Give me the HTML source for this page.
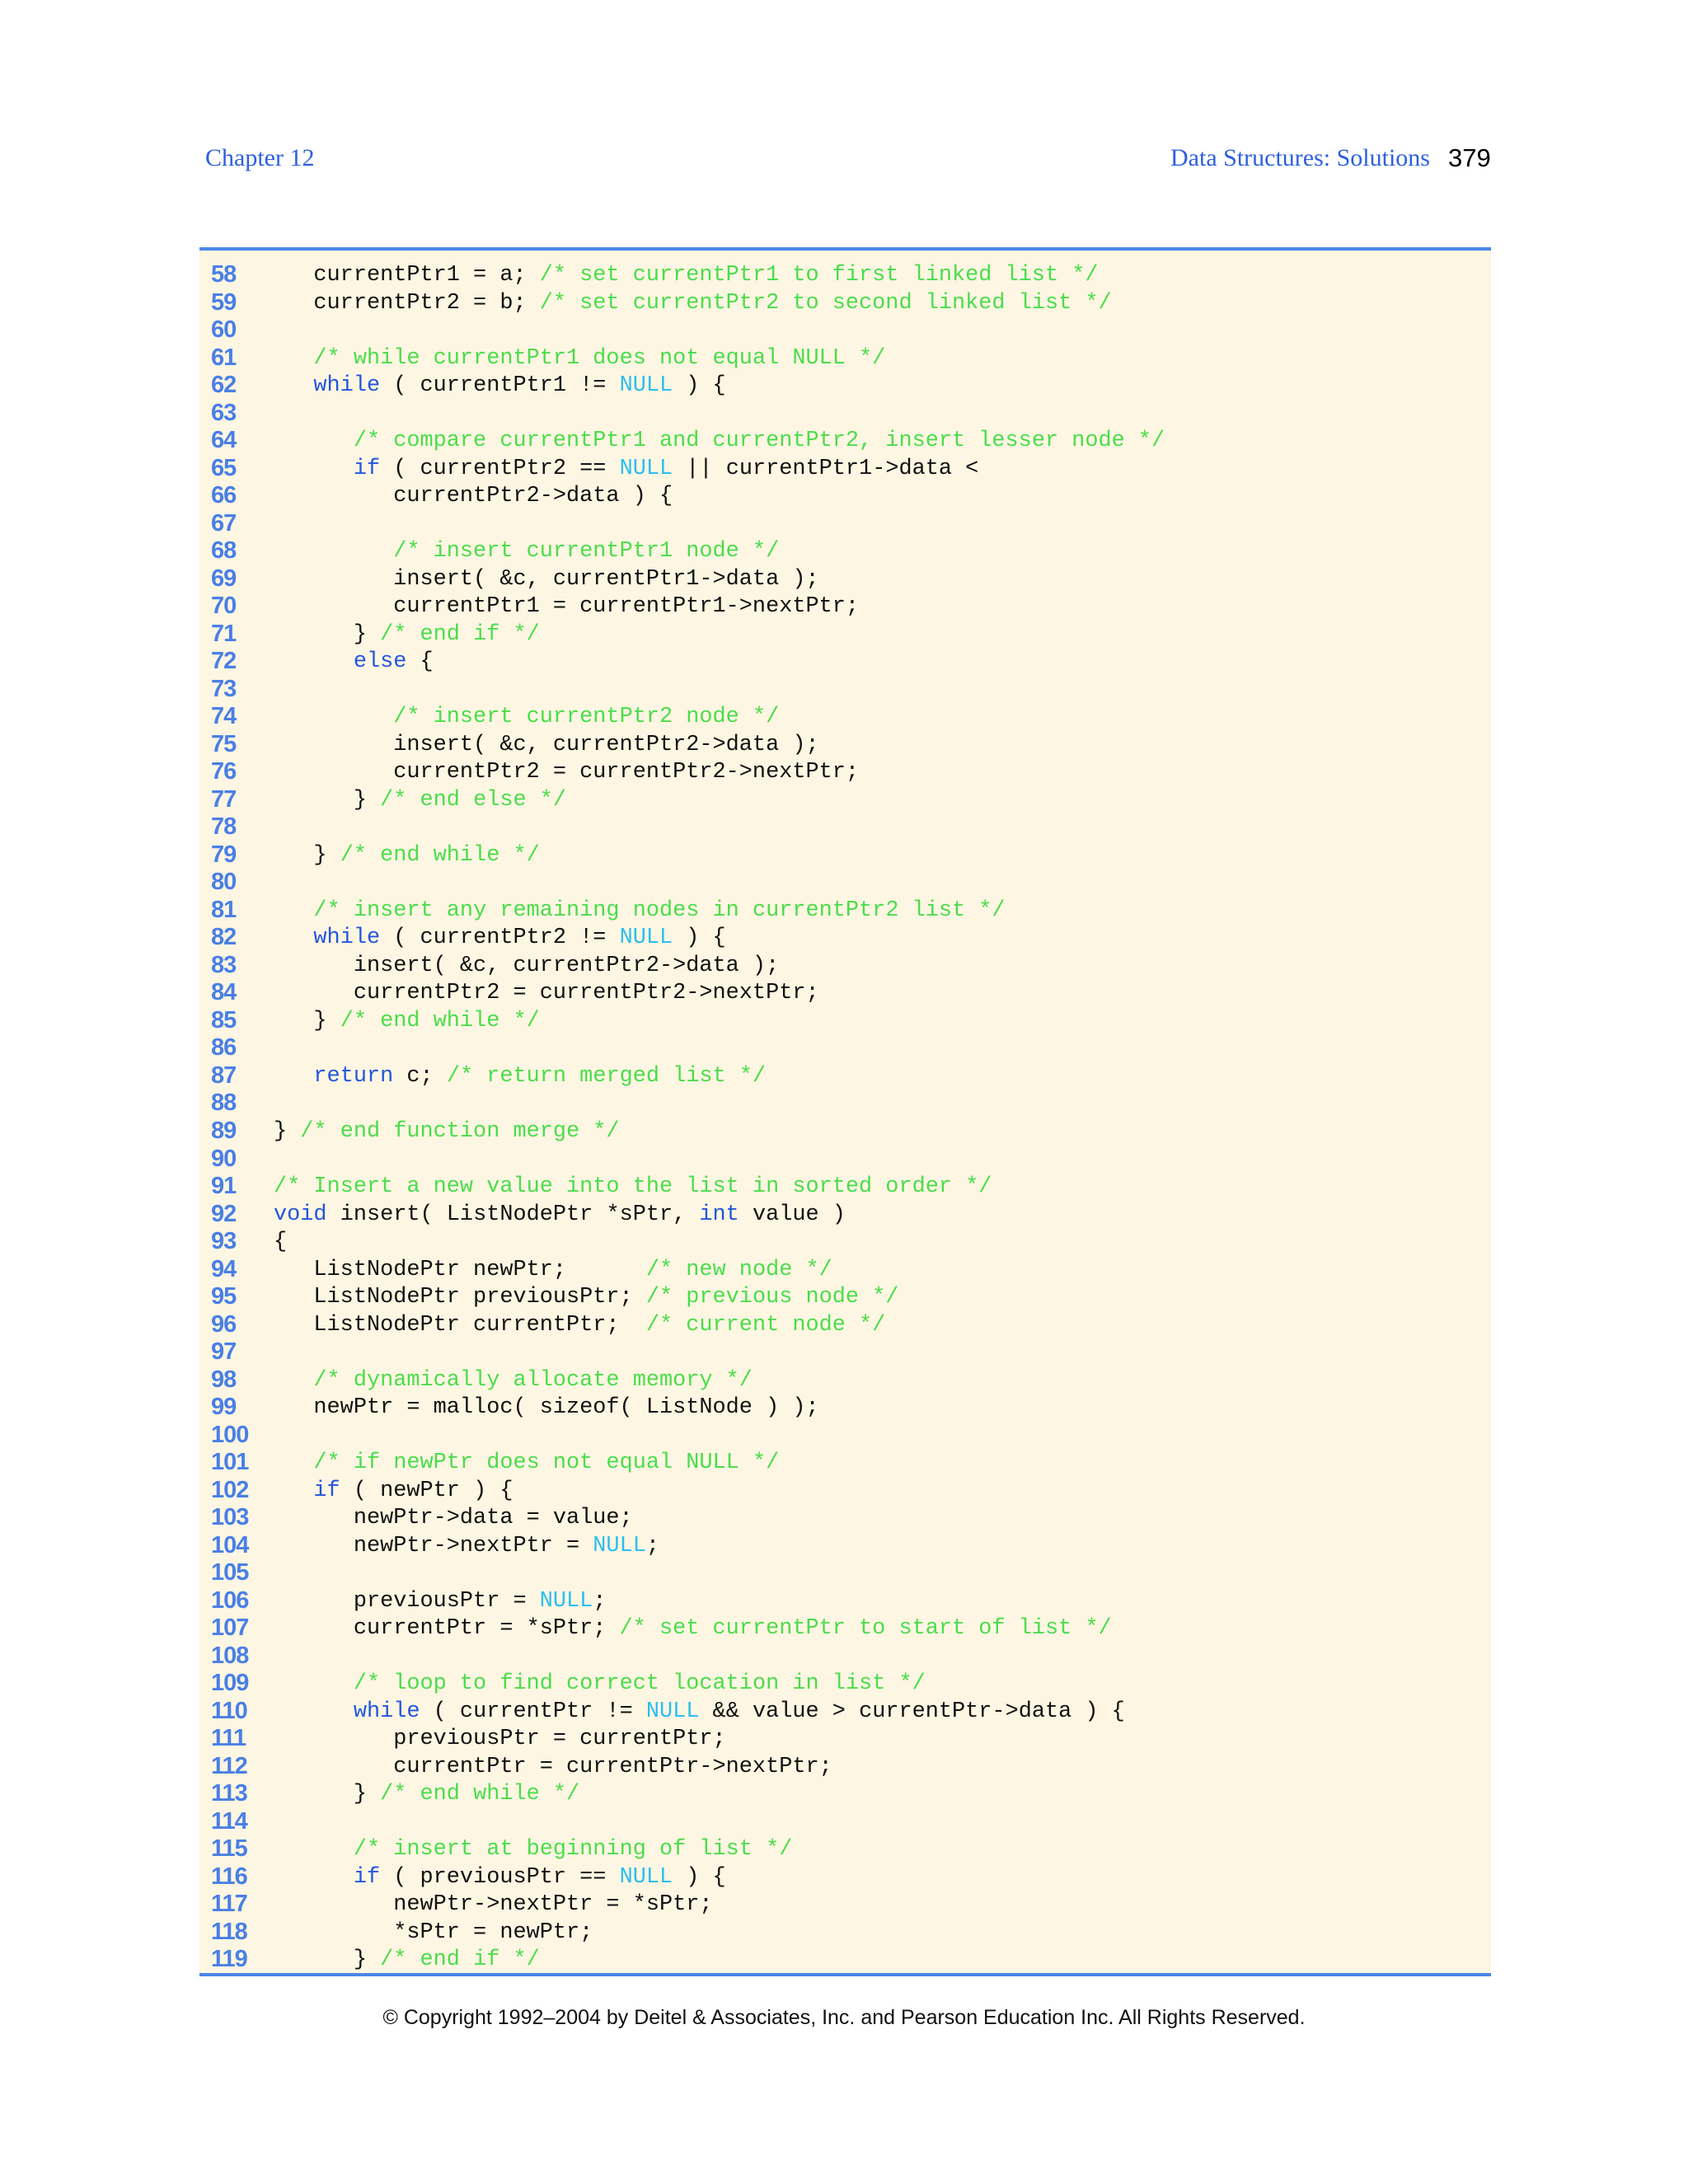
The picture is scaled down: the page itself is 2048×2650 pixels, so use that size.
<!DOCTYPE html>
<html><head><meta charset="utf-8"><style>
html,body{margin:0;padding:0;background:#fff;width:2048px;height:2650px;overflow:hidden;position:relative}
.hd{position:absolute;font-family:"Liberation Serif",serif;font-size:30px;color:#2d5fe0;top:175px}
.pg{position:absolute;font-family:"Liberation Sans",sans-serif;font-size:31px;color:#000;top:174px;left:1757px}
.box{position:absolute;left:242px;top:300px;width:1567px;height:2098px;background:#fdf6e2;border-top:4px solid #4a86e8;border-bottom:4px solid #4a86e8;box-sizing:border-box}
.nums{position:absolute;left:256px;top:317px;font-family:"Liberation Sans",sans-serif;font-weight:bold;font-size:29px;line-height:33.52px;color:#4a7fe6;white-space:pre;margin:0;letter-spacing:-1px}
.code{position:absolute;left:332px;top:318px;font-family:"Liberation Mono",monospace;font-size:26.9px;line-height:33.52px;color:#111;white-space:pre;margin:0}
.c{color:#4cdc4c}.k{color:#2456dc}.n{color:#2cbef0}
.cp{position:absolute;top:2434px;left:0;width:2048px;text-align:center;font-family:"Liberation Sans",sans-serif;font-size:25px;color:#111}
</style></head><body>
<div class="hd" style="left:249px">Chapter 12</div>
<div class="hd" style="left:1420px">Data Structures: Solutions</div>
<div class="pg">379</div>
<div class="box"></div>
<pre class="nums">58
59
60
61
62
63
64
65
66
67
68
69
70
71
72
73
74
75
76
77
78
79
80
81
82
83
84
85
86
87
88
89
90
91
92
93
94
95
96
97
98
99
100
101
102
103
104
105
106
107
108
109
110
111
112
113
114
115
116
117
118
119</pre>
<pre class="code">   currentPtr1 = a; <span class="c">/* set currentPtr1 to first linked list */</span>
   currentPtr2 = b; <span class="c">/* set currentPtr2 to second linked list */</span>

   <span class="c">/* while currentPtr1 does not equal NULL */</span>
   <span class="k">while</span> ( currentPtr1 != <span class="n">NULL</span> ) {

      <span class="c">/* compare currentPtr1 and currentPtr2, insert lesser node */</span>
      <span class="k">if</span> ( currentPtr2 == <span class="n">NULL</span> || currentPtr1-&gt;data &lt;
         currentPtr2-&gt;data ) {

         <span class="c">/* insert currentPtr1 node */</span>
         insert( &amp;c, currentPtr1-&gt;data );
         currentPtr1 = currentPtr1-&gt;nextPtr;
      } <span class="c">/* end if */</span>
      <span class="k">else</span> {

         <span class="c">/* insert currentPtr2 node */</span>
         insert( &amp;c, currentPtr2-&gt;data );
         currentPtr2 = currentPtr2-&gt;nextPtr;
      } <span class="c">/* end else */</span>

   } <span class="c">/* end while */</span>

   <span class="c">/* insert any remaining nodes in currentPtr2 list */</span>
   <span class="k">while</span> ( currentPtr2 != <span class="n">NULL</span> ) {
      insert( &amp;c, currentPtr2-&gt;data );
      currentPtr2 = currentPtr2-&gt;nextPtr;
   } <span class="c">/* end while */</span>

   <span class="k">return</span> c; <span class="c">/* return merged list */</span>

} <span class="c">/* end function merge */</span>

<span class="c">/* Insert a new value into the list in sorted order */</span>
<span class="k">void</span> insert( ListNodePtr *sPtr, <span class="k">int</span> value )
{
   ListNodePtr newPtr;      <span class="c">/* new node */</span>
   ListNodePtr previousPtr; <span class="c">/* previous node */</span>
   ListNodePtr currentPtr;  <span class="c">/* current node */</span>

   <span class="c">/* dynamically allocate memory */</span>
   newPtr = malloc( sizeof( ListNode ) );

   <span class="c">/* if newPtr does not equal NULL */</span>
   <span class="k">if</span> ( newPtr ) {
      newPtr-&gt;data = value;
      newPtr-&gt;nextPtr = <span class="n">NULL</span>;

      previousPtr = <span class="n">NULL</span>;
      currentPtr = *sPtr; <span class="c">/* set currentPtr to start of list */</span>

      <span class="c">/* loop to find correct location in list */</span>
      <span class="k">while</span> ( currentPtr != <span class="n">NULL</span> &amp;&amp; value &gt; currentPtr-&gt;data ) {
         previousPtr = currentPtr;
         currentPtr = currentPtr-&gt;nextPtr;
      } <span class="c">/* end while */</span>

      <span class="c">/* insert at beginning of list */</span>
      <span class="k">if</span> ( previousPtr == <span class="n">NULL</span> ) {
         newPtr-&gt;nextPtr = *sPtr;
         *sPtr = newPtr;
      } <span class="c">/* end if */</span></pre>
<div class="cp">© Copyright 1992–2004 by Deitel &amp; Associates, Inc. and Pearson Education Inc. All Rights Reserved.</div>
</body></html>
